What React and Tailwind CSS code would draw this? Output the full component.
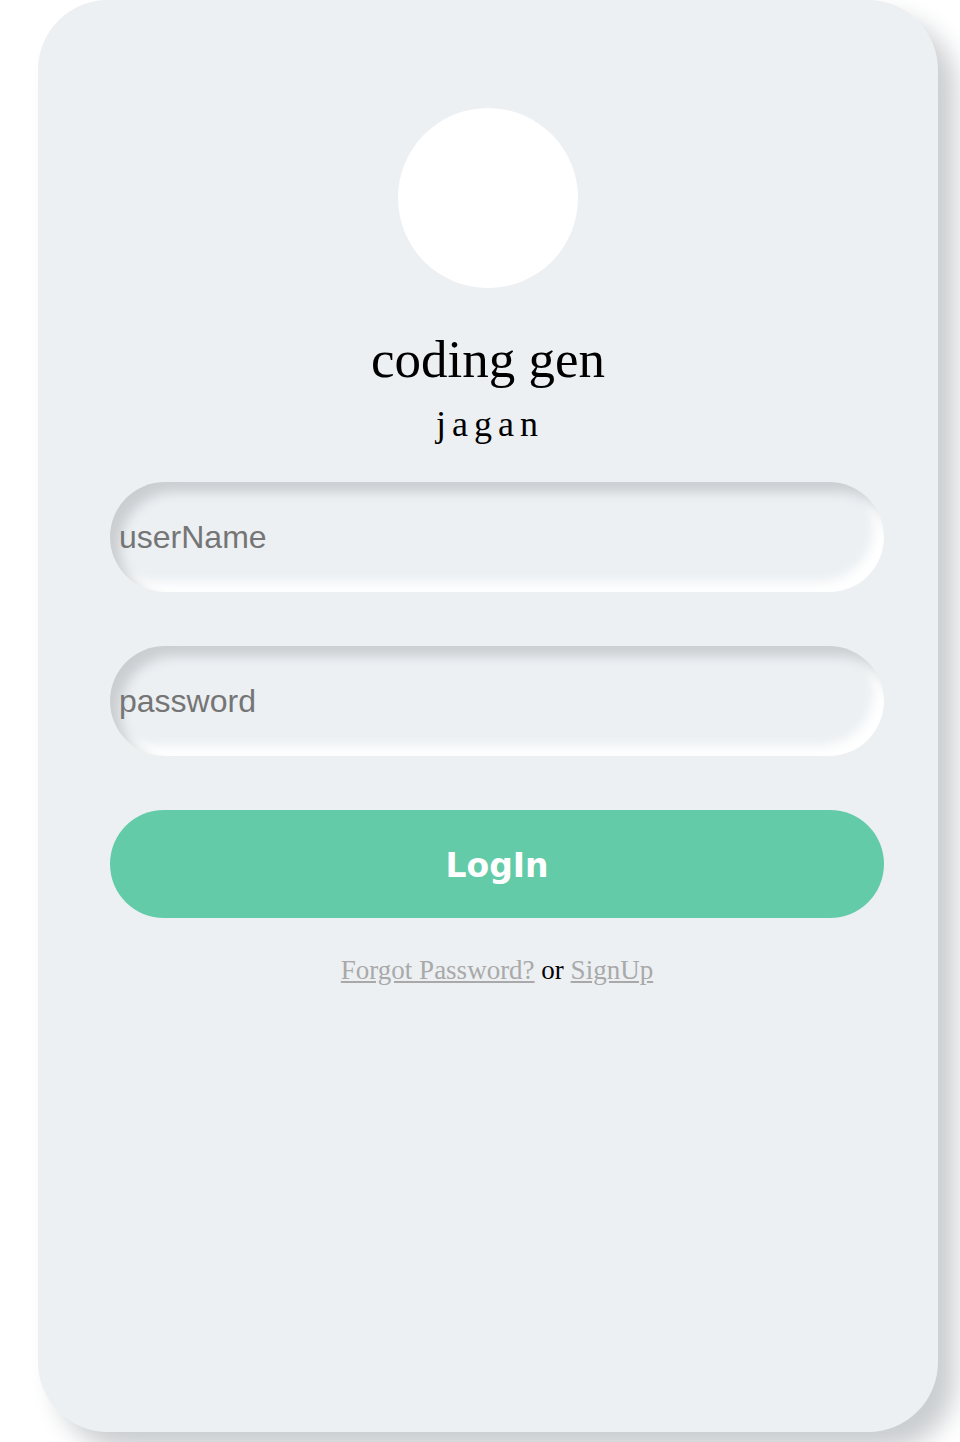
export default function App() {
  return (
    <div className="min-h-[1442px] w-[960px] bg-white">
      <div className="ml-[38px] flex h-[1432px] w-[900px] flex-col rounded-[70px] bg-[#ecf0f3] pt-[108px] shadow-[18px_18px_24px_#cbced1,-13px_-13px_20px_#ffffff]">
        <div className="mx-auto h-[180px] w-[180px] rounded-full bg-white" />

        <h1 className="mt-[45px] text-center font-['Liberation_Serif',serif] text-[53px] font-normal leading-none text-black">
          coding gen
        </h1>
        <p className="mt-[20px] ml-[4px] text-center font-['Liberation_Serif',serif] text-[36px] leading-none tracking-[6px] text-black">
          jagan
        </p>

        <form className="ml-[72px] mt-[40px] flex w-[774px] flex-col gap-[54px]" onSubmit={(e) => e.preventDefault()}>
          <input
            type="text"
            placeholder="userName"
            className="h-[110px] w-full rounded-full bg-[#ecf0f3] pl-[9px] font-['Liberation_Sans',Arial,sans-serif] text-[32px] text-[#333] outline-none placeholder:text-[#757575] shadow-[inset_10px_10px_12px_#cbced1,inset_-10px_-10px_12px_#ffffff]"
          />
          <input
            type="password"
            placeholder="password"
            className="h-[110px] w-full rounded-full bg-[#ecf0f3] pl-[9px] font-['Liberation_Sans',Arial,sans-serif] text-[32px] text-[#333] outline-none placeholder:text-[#757575] shadow-[inset_10px_10px_12px_#cbced1,inset_-10px_-10px_12px_#ffffff]"
          />
          <button
            type="submit"
            className="h-[108px] w-full rounded-full bg-[#63cba7] pt-[3px] font-['DejaVu_Sans',Verdana,sans-serif] text-[33px] font-bold text-white"
          >
            LogIn
          </button>
        </form>

        <p className="ml-[72px] mt-[39px] w-[774px] text-center font-['Liberation_Serif',serif] text-[27px] leading-none text-black">
          <a href="#" className="text-[#a9a9a9] underline">Forgot Password?</a> or{" "}
          <a href="#" className="text-[#a9a9a9] underline">SignUp</a>
        </p>
      </div>
    </div>
  );
}
